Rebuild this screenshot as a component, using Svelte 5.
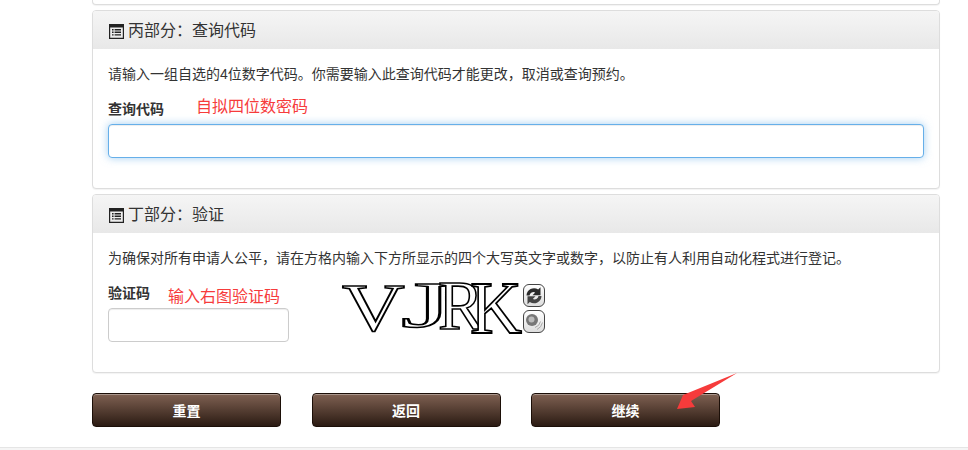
<script>
	let code = '';
	let captcha = '';
</script>

<div class="page">
	<div class="content">
		<div class="panel cut"></div>

		<section class="panel">
			<h3 class="panel-title">
				<svg class="list-icon" viewBox="0 0 15 15">
					<path d="M0.6 0.6h13.8v13.8h-13.8z" fill="none" stroke="#222" stroke-width="1.2" />
					<path d="M1 1h13v2.4h-13z" fill="#222" />
					<path d="M3 5h1.600v1.400h-1.600zM5.600 5h6.400v1.400h-6.400zM3 7.600h1.600v1.400h-1.600zM5.600 7.600h6.400v1.400h-6.400zM3 10.200h1.600v1.400h-1.600zM5.600 10.200h6.400v1.400h-6.400z" fill="#222" />
				</svg>
				<span>丙部分&#xFF1A;查询代码</span>
			</h3>
			<div class="panel-body">
				<p>请输入一组自选的4位数字代码。你需要输入此查询代码才能更改&#xFF0C;取消或查询预约。</p>
				<div class="field">
					<label for="code">查询代码</label>
					<span class="note note-code">自拟四位数密码</span>
					<input id="code" class="focused" bind:value={code} />
				</div>
			</div>
		</section>

		<section class="panel">
			<h3 class="panel-title">
				<svg class="list-icon" viewBox="0 0 15 15">
					<path d="M0.6 0.6h13.8v13.8h-13.8z" fill="none" stroke="#222" stroke-width="1.2" />
					<path d="M1 1h13v2.4h-13z" fill="#222" />
					<path d="M3 5h1.600v1.400h-1.600zM5.600 5h6.400v1.400h-6.400zM3 7.600h1.600v1.400h-1.600zM5.600 7.600h6.400v1.400h-6.400zM3 10.200h1.600v1.400h-1.600zM5.600 10.200h6.400v1.400h-6.400z" fill="#222" />
				</svg>
				<span>丁部分&#xFF1A;验证</span>
			</h3>
			<div class="panel-body">
				<p>为确保对所有申请人公平&#xFF0C;请在方格内输入下方所显示的四个大写英文字或数字&#xFF0C;以防止有人利用自动化程式进行登记。</p>
				<div class="captcha-row">
					<div class="field captcha-field">
						<label for="captcha">验证码</label>
						<span class="note note-captcha">输入右图验证码</span>
						<input id="captcha" bind:value={captcha} />
					</div>
					<svg class="captcha" viewBox="0 0 178 50">
						<g fill="#fff" stroke="#000" stroke-width="1.4" font-family="Liberation Serif, serif" font-size="60">
							<text transform="translate(-1 47) scale(1.45 1.13)">V</text>
							<text transform="translate(58 44) scale(2.2 1.08)">J</text>
							<text transform="translate(95 46) scale(1.15 1.15)">R</text>
							<text transform="translate(127 50) scale(1.2 1.25)">K</text>
						</g>
					</svg>
					<div class="captcha-tools">
						<button class="tool" aria-label="刷新">
							<svg viewBox="0 0 20 20">
								<path d="M2.500 10a7.500 7.500 0 0 1 11.700-6l2.300-2.300v8h-8l2.700-2.700a4 4 0 0 0-5.700 3z" fill="#2b2b2b" />
								<path d="M17.500 10.500a7.500 7.500 0 0 1-11.700 6l-2.300 2.300v-8h8l-2.700 2.700a4 4 0 0 0 5.700-3z" fill="#444" />
							</svg>
						</button>
						<button class="tool" aria-label="语音">
							<svg viewBox="0 0 20 20">
								<circle cx="8" cy="8.500" r="6" fill="#777" />
								<circle cx="7.500" cy="8" r="3" fill="#bbb" />
								<path d="M11 16a8 8 0 0 0 5.500-6M13 18a10 10 0 0 0 5.500-7" fill="none" stroke="#aaa" stroke-width="1" />
							</svg>
						</button>
					</div>
				</div>
			</div>
		</section>

		<div class="actions">
			<button class="brown">重置</button>
			<button class="brown">返回</button>
			<div class="continue">
				<button class="brown">继续</button>
				<svg class="arrow" viewBox="0 0 64 40">
					<polygon points="61,1 7,23 1,37 19,35 15,29" fill="#f63b3b" />
				</svg>
			</div>
		</div>
	</div>
	<footer></footer>
</div>

<style>
	:global(body) {
		background: #fff;
		color: #333;
		font-family: "Liberation Sans", "Noto Sans CJK SC", sans-serif;
		font-size: 14px;
	}

	.page {
		height: 450px;
		overflow: hidden;
		display: flex;
		flex-direction: column;
	}

	.content {
		width: 848px;
		margin-left: 92px;
		flex: 1;
	}

	.panel {
		border: 1px solid #ddd;
		border-radius: 4px;
		margin-bottom: 5px;
		background: #fff;
		box-shadow: 0 1px 1px rgba(0, 0, 0, 0.05);
		overflow: hidden;
	}

	.cut {
		height: 5px;
		box-sizing: border-box;
		border-top: none;
		border-radius: 0 0 4px 4px;
	}

	.panel-title {
		margin: 0;
		height: 38px;
		padding: 2px 0 0 16px;
		box-sizing: border-box;
		display: flex;
		align-items: center;
		gap: 4px;
		font-size: 16px;
		font-weight: normal;
		line-height: 1;
		background: linear-gradient(#f5f5f5, #e8e8e8);
	}

	.list-icon {
		width: 15px;
		height: 15px;
		flex: none;
	}

	.panel-body {
		height: 139px;
		box-sizing: border-box;
		padding: 16px 15px 0;
	}

	p {
		margin: 0;
		line-height: 18px;
	}

	.field {
		position: relative;
		margin-top: 16px;
	}

	label {
		display: block;
		font-weight: bold;
		line-height: 20px;
		margin-bottom: 5px;
	}

	input {
		display: block;
		box-sizing: border-box;
		width: 100%;
		height: 34px;
		border: 1px solid #ccc;
		border-radius: 4px;
		background: #fff;
		box-shadow: inset 0 1px 1px rgba(0, 0, 0, 0.075);
		outline: none;
	}

	.focused {
		border-color: #66afe9;
		box-shadow: inset 0 1px 1px rgba(0, 0, 0, 0.075), 0 0 8px rgba(102, 175, 233, 0.6);
	}

	.note {
		position: absolute;
		color: #f63b3b;
		font-size: 16px;
		line-height: 20px;
	}

	.note-code {
		left: 88px;
		top: -2px;
	}

	.note-captcha {
		left: 60px;
		top: 4px;
	}

	.captcha-row {
		display: flex;
		align-items: flex-start;
		margin-top: 16px;
	}

	.captcha-field {
		width: 181px;
		margin-top: 0;
	}

	.captcha {
		width: 178px;
		height: 50px;
		margin: 0 2px 0 54px;
		overflow: visible;
	}

	.captcha-tools {
		display: flex;
		flex-direction: column;
		gap: 3px;
		margin-top: 1px;
	}

	.tool {
		width: 22px;
		height: 23px;
		padding: 0;
		border: 1px solid #444;
		border-radius: 6px;
		background: linear-gradient(#fff, #ddd);
		display: flex;
	}

	.tool svg {
		width: 100%;
		height: 100%;
	}

	.actions {
		display: flex;
		gap: 30.5px;
		margin-top: 20px;
	}

	.continue {
		position: relative;
	}

	.brown {
		display: block;
		box-sizing: border-box;
		width: 189px;
		height: 34px;
		border: 1px solid #1c0f08;
		border-radius: 4px;
		background: linear-gradient(#7f6152, #2b1b13);
		box-shadow: inset 0 1px 0 rgba(255, 255, 255, 0.35);
		color: #fff;
		font-family: inherit;
		font-size: 14px;
		font-weight: bold;
	}

	.arrow {
		position: absolute;
		left: 145px;
		top: -21px;
		width: 64px;
		height: 40px;
	}

	footer {
		height: 2px;
		flex: none;
		background: #f5f5f5;
		border-top: 1px solid #e5e5e5;
	}
</style>
